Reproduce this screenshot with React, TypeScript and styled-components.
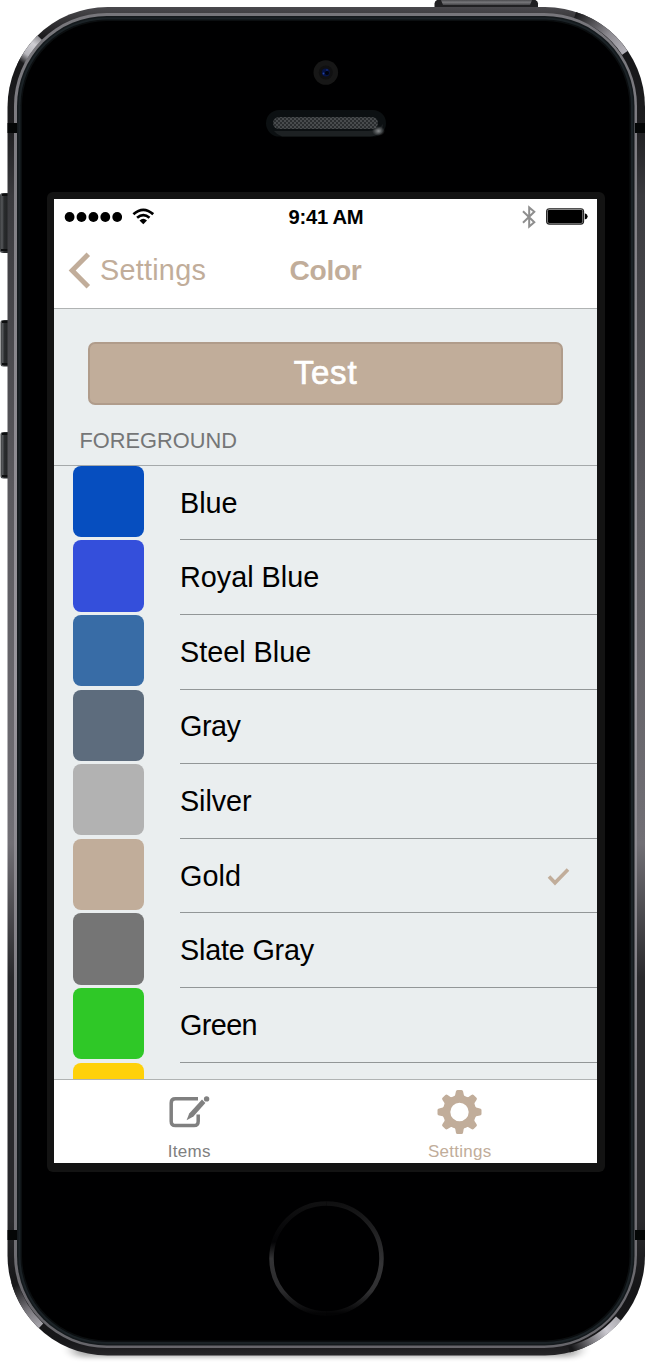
import React from "react";
import styled, { createGlobalStyle } from "styled-components";

const GOLD = "#c1ad9a";

const GlobalStyle = createGlobalStyle`
  body {
    margin: 0;
    background: #fff;
    font-family: "Liberation Sans", Arial, sans-serif;
  }
`;

const Phone = styled.div`
  position: relative;
  box-sizing: border-box;
  width: 645px;
  height: 1366px;
  padding: 192px 40px 194px 47px;
  overflow: hidden;
`;

const ChassisSvg = styled.svg`
  position: absolute;
  inset: 0;
`;

const Bezel = styled.div`
  position: relative;
  box-sizing: border-box;
  width: 558px;
  height: 980px;
  padding: 7px 8px 9px 7px;
  border-radius: 6px;
  background: #131313;
`;

const Screen = styled.div`
  display: flex;
  flex-direction: column;
  width: 543px;
  height: 964px;
  overflow: hidden;
  background: #eaeeef;
`;

const StatusBar = styled.div`
  display: grid;
  grid-template-columns: 1fr auto 1fr;
  align-items: center;
  height: 35px;
  padding: 0 9px 0 10px;
  background: #fff;
`;

const Time = styled.span`
  padding-top: 1px;
  font-size: 20.2px;
  font-weight: 700;
  letter-spacing: -0.25px;
  line-height: 34px;
`;

const StatusGroup = styled.div<{ $end?: boolean }>`
  display: flex;
  align-items: center;
  gap: 10px;
  justify-content: ${(p) => (p.$end ? "flex-end" : "flex-start")};
`;

const NavBar = styled.div`
  display: grid;
  grid-template-columns: 1fr auto 1fr;
  align-items: center;
  box-sizing: border-box;
  height: 75px;
  padding: 0 14px 1px;
  border-bottom: 1px solid #b0b3b3;
  background: #fff;
  color: ${GOLD};
  font-size: 28.8px;
`;

const Back = styled.div`
  display: flex;
  align-items: center;
  gap: 9px;
  letter-spacing: 0.25px;
`;

const Title = styled.span`
  font-size: 28.2px;
  font-weight: 700;
  letter-spacing: -0.35px;
`;

const Content = styled.div`
  flex: 1;
  min-height: 0;
  overflow: hidden;
`;

const TestButton = styled.div`
  box-sizing: border-box;
  height: 63px;
  margin: 33px 34px 0;
  border: 2px solid #b09c8b;
  border-radius: 7px;
  background: ${GOLD};
  color: #fff;
  font-size: 33px;
  letter-spacing: 0.8px;
  line-height: 57px;
  text-align: center;
  -webkit-text-stroke: 0.7px #fff;
`;

const SectionHeader = styled.div`
  box-sizing: border-box;
  height: 60.8px;
  padding: 23px 0 0 25.5px;
  border-bottom: 1px solid #a5a9aa;
  color: #757677;
  font-size: 21.8px;
  line-height: 25px;
`;

const Row = styled.div`
  display: flex;
  height: 74.6px;
`;

const Swatch = styled.div<{ $color: string }>`
  width: 71.3px;
  height: 71.3px;
  margin-left: 18.7px;
  border-radius: 8px;
  background: ${(p) => p.$color};
`;

const RowBody = styled.div<{ $tracking: number }>`
  display: flex;
  flex: 1;
  align-items: center;
  justify-content: space-between;
  box-sizing: border-box;
  margin-left: 36px;
  padding: 1px 27px 0 0;
  border-bottom: 1px solid #929697;
  color: #000;
  font-size: 28.8px;
  letter-spacing: ${(p) => p.$tracking}px;
`;

const TabBar = styled.div`
  display: grid;
  grid-template-columns: 1fr 1fr;
  box-sizing: border-box;
  height: 84px;
  padding-right: 2px;
  border-top: 1px solid #b0b3b3;
  background: #fff;
`;

const Tab = styled.div<{ $active?: boolean }>`
  display: flex;
  flex-direction: column;
  align-items: center;
  padding-top: 10px;
  color: ${(p) => (p.$active ? GOLD : "#808080")};
  font-size: 17px;
  letter-spacing: 0.25px;
  line-height: 20px;
`;

const TabIcon = styled.svg`
  display: block;
  margin-bottom: 8px;
`;

const COLORS = [
  { name: "Blue", color: "#064ebf", tracking: 0 },
  { name: "Royal Blue", color: "#344fdb", tracking: 0 },
  { name: "Steel Blue", color: "#386ca6", tracking: 0 },
  { name: "Gray", color: "#5d6c7d", tracking: -0.5 },
  { name: "Silver", color: "#b2b2b2", tracking: -0.1 },
  { name: "Gold", color: GOLD, tracking: 0.1 },
  { name: "Slate Gray", color: "#757575", tracking: -0.2 },
  { name: "Green", color: "#2fc827", tracking: -0.6 },
  { name: "", color: "#ffd10a", tracking: 0 },
];

function Chassis() {
  return (
    <ChassisSvg width="645" height="1366" viewBox="0 0 645 1366">
      <defs>
        <linearGradient id="band" x1="0" y1="0" x2="0" y2="1">
          <stop offset="0" stopColor="#4a494d" />
          <stop offset="0.008" stopColor="#39383b" />
          <stop offset="0.025" stopColor="#151517" />
          <stop offset="0.085" stopColor="#1d1d1f" />
          <stop offset="0.14" stopColor="#3a3a3e" />
          <stop offset="0.36" stopColor="#5a595e" />
          <stop offset="0.62" stopColor="#716f75" />
          <stop offset="0.72" stopColor="#29292c" />
          <stop offset="0.9" stopColor="#29292c" />
          <stop offset="0.95" stopColor="#151517" />
          <stop offset="0.99" stopColor="#171719" />
          <stop offset="1" stopColor="#262528" />
        </linearGradient>
        <linearGradient id="rim" x1="0" y1="0" x2="0" y2="1">
          <stop offset="0" stopColor="#77767b" />
          <stop offset="0.5" stopColor="#99969d" />
          <stop offset="1" stopColor="#66656a" />
        </linearGradient>
        <linearGradient id="hlTL" gradientUnits="userSpaceOnUse" x1="39" y1="36" x2="21" y2="62">
          <stop offset="0" stopColor="#8c8b90" />
          <stop offset="0.3" stopColor="#cfced3" />
          <stop offset="0.7" stopColor="#b5b4ba" />
          <stop offset="1" stopColor="#1a1a1c" />
        </linearGradient>
        <linearGradient id="hlTR" gradientUnits="userSpaceOnUse" x1="577" y1="14" x2="626" y2="52">
          <stop offset="0" stopColor="#1c1c1e" />
          <stop offset="0.6" stopColor="#8c8a90" />
          <stop offset="1" stopColor="#b4b2b9" />
        </linearGradient>
        <linearGradient id="hlBL" gradientUnits="userSpaceOnUse" x1="15" y1="1286" x2="41" y2="1328">
          <stop offset="0" stopColor="#19191b" />
          <stop offset="0.55" stopColor="#77757b" />
          <stop offset="1" stopColor="#aaa8ae" />
        </linearGradient>
        <linearGradient id="hlBR" gradientUnits="userSpaceOnUse" x1="620" y1="1321" x2="573" y2="1350">
          <stop offset="0" stopColor="#aeadb2" />
          <stop offset="0.3" stopColor="#cccad1" />
          <stop offset="0.65" stopColor="#77767b" />
          <stop offset="1" stopColor="#171719" />
        </linearGradient>
        <linearGradient id="topKey" x1="0" y1="0" x2="0" y2="1">
          <stop offset="0" stopColor="#4b4b4e" />
          <stop offset="0.45" stopColor="#77777a" />
          <stop offset="1" stopColor="#454548" />
        </linearGradient>
        <linearGradient id="sideKey" x1="0" y1="0" x2="1" y2="0">
          <stop offset="0" stopColor="#3a3c3e" />
          <stop offset="0.2" stopColor="#55575a" />
          <stop offset="0.4" stopColor="#2a2c2e" />
          <stop offset="1" stopColor="#1c1d1e" />
        </linearGradient>
        <linearGradient id="homeRight" x1="0" y1="0" x2="0" y2="1">
          <stop offset="0" stopColor="#101011" />
          <stop offset="0.55" stopColor="#343436" />
          <stop offset="0.8" stopColor="#303032" />
          <stop offset="1" stopColor="#030304" />
        </linearGradient>
        <linearGradient id="homeLeft" x1="0" y1="0" x2="0" y2="1">
          <stop offset="0" stopColor="#101011" />
          <stop offset="0.35" stopColor="#030305" />
          <stop offset="0.5" stopColor="#333335" />
          <stop offset="0.8" stopColor="#2a2a2c" />
          <stop offset="1" stopColor="#040405" />
        </linearGradient>
        <radialGradient id="glint">
          <stop offset="0" stopColor="#8a8d8f" />
          <stop offset="1" stopColor="#75787a" stopOpacity="0" />
        </radialGradient>
        <pattern id="mesh" width="4" height="4" patternUnits="userSpaceOnUse">
          <rect width="4" height="4" fill="#2a2d2f" />
          <path d="M0 0h2v2H0zM2 2h2v2H2z" fill="#484b4d" />
        </pattern>
        <filter id="soft" x="-10%" y="-100%" width="120%" height="300%">
          <feGaussianBlur stdDeviation="6 2.5" />
        </filter>
      </defs>

      <rect x="72" y="1340" width="508" height="17" rx="9" fill="#000" opacity="0.32" filter="url(#soft)" />

      <path d="M434.5 8V3.5Q434.5 1 437 0H535.5Q538 1 538 3.5V8Z" fill="#202022" />
      <path d="M441 0H532L530 5H443Z" fill="url(#topKey)" />
      <rect x="0" y="193" width="10" height="60" rx="2.5" fill="url(#sideKey)" />
      <rect x="0.5" y="320" width="10" height="46.5" rx="2.5" fill="url(#sideKey)" />
      <rect x="0.5" y="432" width="10" height="46.5" rx="2.5" fill="url(#sideKey)" />
      <path d="M2 195h6M2 322h6M2 364h6M2 434h6M2 476h6M1 250h7" stroke="#0d0e0f" strokeWidth="2" />

      <rect x="7.5" y="7" width="637.5" height="1348.5" rx="100" fill="url(#band)" />
      <g fill="none" strokeWidth="6.5">
        <path d="M39.8 37.8A96.75 96.75 0 0 0 20 66" stroke="url(#hlTL)" />
        <path d="M575 15.2A96.75 96.75 0 0 1 624.9 52.8" stroke="url(#hlTR)" />
        <path d="M14.4 1281.5A96.75 96.75 0 0 0 41 1325.8" stroke="url(#hlBL)" />
        <path d="M618.5 1318.6A96.75 96.75 0 0 1 569 1349.3" stroke="url(#hlBR)" />
      </g>
      <rect x="14" y="13" width="623" height="1335" rx="93" fill="url(#rim)" />
      <rect x="17" y="16" width="617.5" height="1329.5" rx="90" fill="#14191c" />
      <rect x="18.5" y="17.5" width="614.5" height="1326.5" rx="88" fill="#1b2226" />
      <rect x="20.5" y="19.5" width="610.5" height="1322.5" rx="86" fill="#0b0e10" />
      <rect x="22" y="21" width="607.5" height="1319.5" rx="85" fill="#000001" />
      <path d="M7.5 123h9.5v10H7.5zM635 123h10v10H635zM7.5 1230h9.5v10H7.5zM635 1230h10v10H635z" fill="#040606" />

      <circle cx="325.8" cy="72.5" r="12.3" fill="#171717" />
      <circle cx="325.8" cy="72.5" r="7" fill="#101011" />
      <circle cx="325.8" cy="72.5" r="4" fill="#061345" />
      <circle cx="327" cy="73" r="2" fill="#01030c" />
      <circle cx="323.5" cy="73.5" r="0.9" fill="#2444a4" />
      <circle cx="327" cy="70" r="0.8" fill="#1c3992" />

      <rect x="266" y="110" width="120" height="26.5" rx="13.2" fill="#0c1012" />
      <path d="M274 131Q284 131 292 131H368Q378 131 383 124Q382 136 370 136.5H282Q277 135 274 131Z" fill="#1d2123" />
      <rect x="273" y="117" width="105" height="12" rx="6" fill="url(#mesh)" />
      <ellipse cx="378.5" cy="131" rx="6.5" ry="5" fill="url(#glint)" />

      <path d="M326.5 1203.5A55 55 0 0 1 326.5 1313.5" fill="none" stroke="url(#homeRight)" strokeWidth="4.5" />
      <path d="M326.5 1203.5A55 55 0 0 0 326.5 1313.5" fill="none" stroke="url(#homeLeft)" strokeWidth="4.5" />
    </ChassisSvg>
  );
}

function Signal() {
  return (
    <svg width="58" height="12" viewBox="0 0 58 12">
      {[0, 1, 2, 3, 4].map((i) => (
        <circle key={i} cx={5.6 + i * 11.9} cy="6" r="4.9" />
      ))}
    </svg>
  );
}

function Wifi() {
  return (
    <svg width="22" height="17" viewBox="0 0 22 17">
      <g fill="none" stroke="#000" strokeWidth="2.7">
        <path d="M1.4 6.2Q11.4 -2.6 21.2 6.2" />
        <path d="M5.1 9.8Q11.3 4.4 17.5 9.8" />
      </g>
      <path d="M7.5 12.4Q11.3 9.2 15 12.4L11.3 16.2Z" />
    </svg>
  );
}

function Bluetooth() {
  return (
    <svg width="14" height="24" viewBox="0 0 14 24" fill="none" stroke="#8e8e8e" strokeWidth="2">
      <path d="M1 6.3 12.3 17.2 7.2 21.6V2.4L12.3 6.8 1 17.7" />
    </svg>
  );
}

function Battery() {
  return (
    <svg width="42" height="17" viewBox="0 0 42 17">
      <rect x="0.6" y="0.7" width="37" height="15.4" rx="2.8" fill="#aaa" stroke="#222" strokeWidth="1.1" />
      <rect x="1.8" y="1.9" width="34.6" height="13" rx="1.3" />
      <path d="M38.8 5.3Q41.7 6 41.7 8.4T38.8 11.5Z" />
    </svg>
  );
}

function EditIcon() {
  return (
    <TabIcon width="42" height="44" viewBox="0 0 42 44" fill="none" stroke="currentColor">
      <path
        d="M30 8.8H7.4Q3.2 8.8 3.2 13V31.2Q3.2 35.6 7.4 35.6H26Q30.2 35.6 30.2 31.2V24.6"
        strokeWidth="3.5"
      />
      <path d="M34 9.6 37.4 13 25.4 26.6 18.6 30.2 21.2 23.4Z" fill="currentColor" stroke="none" />
      <circle cx="38.6" cy="8.9" r="2.7" fill="currentColor" stroke="none" />
    </TabIcon>
  );
}

function GearIcon() {
  return (
    <TabIcon width="45" height="44" viewBox="-22.5 -22 45 44" fill="currentColor">
      <circle r="13" fill="none" stroke="currentColor" strokeWidth="7.6" />
      {[0, 45, 90, 135, 180, 225, 270, 315].map((a) => (
        <path key={a} transform={`rotate(${a})`} d="M-6 -14.5Q-4 -16 -3.6 -20.4Q-3.4 -22 -2 -22H2Q3.4 -22 3.6 -20.4Q4 -16 6 -14.5Z" />
      ))}
    </TabIcon>
  );
}

export default function App() {
  return (
    <Phone>
      <GlobalStyle />
      <Chassis />
      <Bezel>
        <Screen>
          <StatusBar>
            <StatusGroup>
              <Signal />
              <Wifi />
            </StatusGroup>
            <Time>9:41 AM</Time>
            <StatusGroup $end>
              <Bluetooth />
              <Battery />
            </StatusGroup>
          </StatusBar>
          <NavBar>
            <Back>
              <svg width="23" height="37" viewBox="0 0 23 37" fill="none" stroke={GOLD} strokeWidth="5">
                <path d="M20.3 2.3 4.2 18.5 20.3 34.7" />
              </svg>
              Settings
            </Back>
            <Title>Color</Title>
          </NavBar>
          <Content>
            <TestButton>Test</TestButton>
            <SectionHeader>FOREGROUND</SectionHeader>
            {COLORS.map(({ name, color, tracking }) => (
              <Row key={color}>
                <Swatch $color={color} />
                <RowBody $tracking={tracking}>
                  {name}
                  {name === "Gold" && (
                    <svg width="23" height="19" viewBox="0 0 23 19" fill="none" stroke={GOLD} strokeWidth="3.6">
                      <path d="M2 9.5 8 15.8 21 2.5" />
                    </svg>
                  )}
                </RowBody>
              </Row>
            ))}
          </Content>
          <TabBar>
            <Tab>
              <EditIcon />
              Items
            </Tab>
            <Tab $active>
              <GearIcon />
              Settings
            </Tab>
          </TabBar>
        </Screen>
      </Bezel>
    </Phone>
  );
}
